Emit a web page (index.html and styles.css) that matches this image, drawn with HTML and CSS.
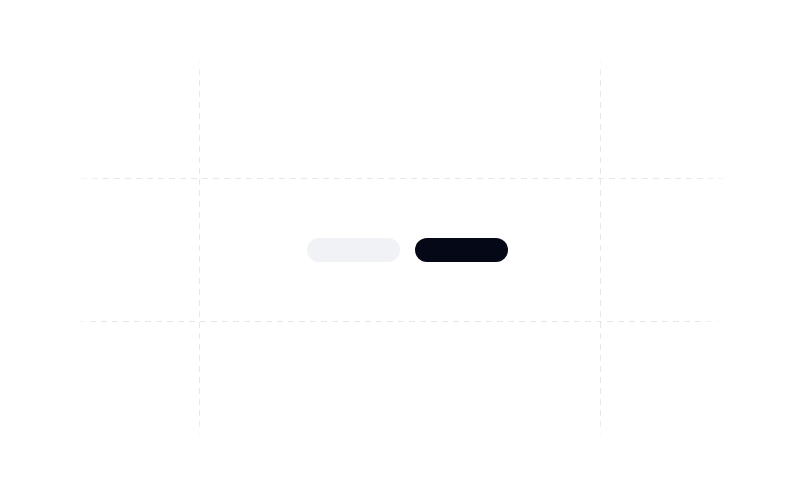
FILE: index.html
```html
<!DOCTYPE html>
<html lang="en">
<head>
    <meta charset="UTF-8">
    <meta name="viewport" content="width=device-width, initial-scale=1.0">
    <title>Button Group</title>
    <link rel="stylesheet" href="styles.css">
</head>
<body>

<div class="stage">
    <!-- Guide lines around the preview area -->
    <div class="guide guide-h guide-top"></div>
    <div class="guide guide-h guide-bottom"></div>
    <div class="guide guide-v guide-left"></div>
    <div class="guide guide-v guide-right"></div>

    <div class="button-row">
        <button class="btn btn-secondary" aria-label="Cancel"></button>
        <button class="btn btn-primary" aria-label="Continue"></button>
    </div>
</div>

</body>
</html>
```

FILE: styles.css
```css
body {
    margin: 0;
    padding: 0;
    background-color: #ffffff;
    font-family: Inter, "Liberation Sans", sans-serif;
}
.stage {
    position: relative;
    width: 800px;
    height: 500px;
    display: flex;
    align-items: center;
    justify-content: center;
}
.guide {
    position: absolute;
}
.guide-h {
    height: 1px;
    background-image: repeating-linear-gradient(90deg, #e6e7eb 0 6px, transparent 6px 11px);
    -webkit-mask-image: linear-gradient(90deg, transparent, #000 5%, #000 95%, transparent);
    mask-image: linear-gradient(90deg, transparent, #000 5%, #000 95%, transparent);
}
.guide-v {
    width: 1px;
    background-image: repeating-linear-gradient(180deg, #e6e7eb 0 6px, transparent 6px 11px);
    -webkit-mask-image: linear-gradient(180deg, transparent, #000 5%, #000 95%, transparent);
    mask-image: linear-gradient(180deg, transparent, #000 5%, #000 95%, transparent);
}
.guide-top {
    top: 178px;
    left: 70px;
    width: 662px;
}
.guide-bottom {
    top: 321px;
    left: 68px;
    width: 660px;
}
.guide-left {
    left: 199px;
    top: 58px;
    height: 380px;
}
.guide-right {
    left: 600px;
    top: 58px;
    height: 380px;
}
.button-row {
    display: flex;
    gap: 15px;
    margin-left: 15px;
}
.btn {
    width: 93px;
    height: 24px;
    border: none;
    border-radius: 12px;
    padding: 0;
    cursor: pointer;
}
.btn-secondary {
    background-color: #f1f2f5;
}
.btn-primary {
    background-color: #050816;
}
```
